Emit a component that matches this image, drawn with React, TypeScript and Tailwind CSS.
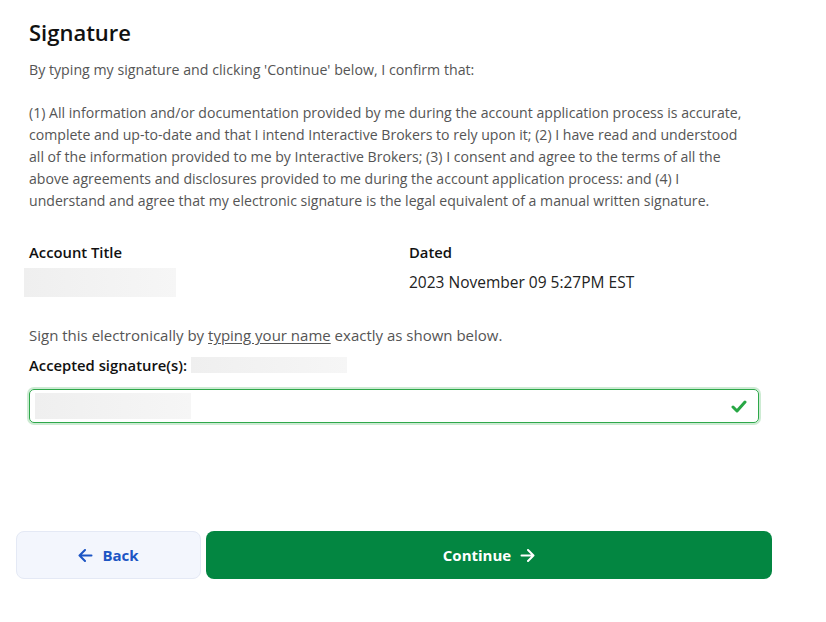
import React from 'react';

const font = { fontFamily: '"Open Sans", "Liberation Sans", sans-serif' };

const Redacted: React.FC<{ className: string }> = ({ className }) => (
  <div className={`bg-gradient-to-r from-[#efefef] to-[#f6f6f6] ${className}`} />
);

const Arrow: React.FC<{ dir: 'left' | 'right' }> = ({ dir }) => (
  <svg
    width="15"
    height="13"
    viewBox="0 0 15 13"
    fill="none"
    stroke="currentColor"
    strokeWidth="2"
    strokeLinecap="round"
    strokeLinejoin="round"
    className={dir === 'right' ? 'rotate-180' : ''}
  >
    <path d="M1.5 6.5h12M7 1 1.5 6.5 7 12" />
  </svg>
);

const App: React.FC = () => {
  return (
    <div className="w-[826px] h-[622px] bg-white text-[#333]" style={font}>
      <div className="px-[29px] pt-[18px]">
        <h1 className="text-[22px] leading-[28px] font-semibold text-[#111]">Signature</h1>
        <p className="mt-[13px] text-[14.2px] leading-[22px] text-[#555]">
          By typing my signature and clicking 'Continue' below, I confirm that:
        </p>
        <p className="mt-[21px] text-[14.1px] leading-[22px] text-[#555] whitespace-nowrap">
          (1) All information and/or documentation provided by me during the account application process is accurate,
          <br />
          complete and up-to-date and that I intend Interactive Brokers to rely upon it; (2) I have read and understood
          <br />
          all of the information provided to me by Interactive Brokers; (3) I consent and agree to the terms of all the
          <br />
          above agreements and disclosures provided to me during the account application process: and (4) I
          <br />
          understand and agree that my electronic signature is the legal equivalent of a manual written signature.
        </p>

        <div className="mt-[30px] flex">
          <div className="w-[380px]">
            <div className="text-[14.8px] leading-[20px] font-semibold text-[#111]">Account Title</div>
            <Redacted className="mt-[6px] -ml-[5px] w-[152px] h-[29px]" />
          </div>
          <div>
            <div className="text-[14.8px] leading-[20px] font-semibold text-[#111]">Dated</div>
            <div className="mt-[10px] text-[15.5px] leading-[20px] text-[#222]">2023 November 09 5:27PM EST</div>
          </div>
        </div>

        <p className="mt-[27px] text-[15px] leading-[22px] text-[#555]">
          Sign this electronically by <span className="underline underline-offset-2">typing your name</span> exactly as shown below.
        </p>
        <div className="mt-[9px] flex items-center h-[20px]">
          <span className="text-[14.8px] font-semibold text-[#111]">Accepted signature(s):</span>
          <Redacted className="ml-[4px] w-[156px] h-[16px]" />
        </div>

        <div className="mt-[14px] w-[730px] h-[34px] rounded-[5px] border border-[#2ea84a] ring-2 ring-[#cdebd3] flex items-center pl-[5px] pr-[11px]">
          <Redacted className="w-[156px] h-[26px]" />
          <div className="flex-1" />
          <svg width="16" height="13" viewBox="0 0 16 13" fill="none" stroke="#28a745" strokeWidth="3" strokeLinecap="round" strokeLinejoin="round">
            <path d="M2 7l4 4 8-9" />
          </svg>
        </div>
      </div>

      <div className="mt-[108px] ml-[16px] w-[756px] flex gap-[5px]">
        <button className="w-[185px] h-[48px] rounded-[8px] bg-[#f3f6fd] border border-[#e4e9f5] flex items-center justify-center gap-[9px] text-[#1c55c4] text-[15px] font-bold">
          <Arrow dir="left" />
          Back
        </button>
        <button className="flex-1 h-[48px] rounded-[8px] bg-[#038641] flex items-center justify-center gap-[9px] text-white text-[15px] font-bold">
          Continue
          <Arrow dir="right" />
        </button>
      </div>
    </div>
  );
};

export default App;
